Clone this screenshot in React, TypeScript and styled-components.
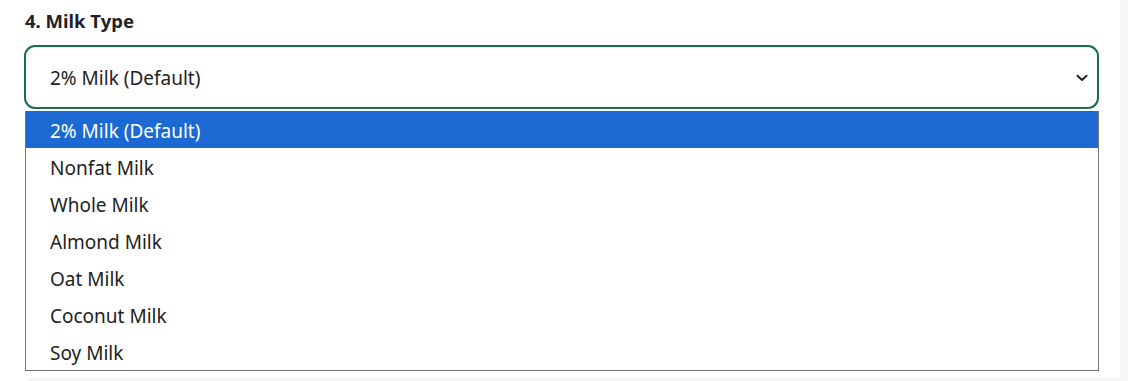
import React, { useState } from "react";
import styled, { createGlobalStyle } from "styled-components";

const GlobalStyle = createGlobalStyle`
  html, body {
    margin: 0;
    padding: 0;
    background: #ffffff;
    font-family: "Noto Sans", "Open Sans", sans-serif;
    color: #212529;
  }
`;

const options = [
  "2% Milk (Default)",
  "Nonfat Milk",
  "Whole Milk",
  "Almond Milk",
  "Oat Milk",
  "Coconut Milk",
  "Soy Milk",
];

const Page = styled.div`
  display: flex;
  width: 1128px;
  height: 381px;
  overflow: hidden;
`;

const Main = styled.div`
  flex: 1;
  display: flex;
  flex-direction: column;
`;

const Section = styled.div`
  flex: 1;
  padding: 9px 21px 0 24px;
`;

const BottomStrip = styled.div`
  height: 3px;
  margin-left: 28px;
  background: #f3f5f6;
`;

const SideStrip = styled.div`
  width: 8px;
  background: #f5f6f7;
`;

const Label = styled.div`
  font-size: 18.5px;
  font-weight: 700;
  line-height: 24px;
  color: #1f2326;
  margin-left: 1px;
`;

const SelectWrap = styled.div`
  position: relative;
  margin-top: 12px;
`;

const SelectBox = styled.div`
  box-sizing: border-box;
  height: 64px;
  border: 2px solid #1a6e4f;
  border-radius: 11px;
  display: flex;
  align-items: center;
  justify-content: space-between;
  padding: 1px 9px 0 24px;
  font-size: 19px;
  color: #222;
`;

const Menu = styled.ul`
  position: absolute;
  left: 1px;
  top: 66px;
  width: 1074px;
  box-sizing: border-box;
  margin: 0;
  padding: 0;
  list-style: none;
  background: #fff;
  border: 1px solid #767676;
  border-top: none;
`;

const Option = styled.li<{ $active?: boolean }>`
  height: 37px;
  display: flex;
  align-items: center;
  padding: 2px 0 0 24px;
  box-sizing: border-box;
  font-size: 19px;
  background: ${(p) => (p.$active ? "#1c69d4" : "#fff")};
  color: ${(p) => (p.$active ? "#fff" : "#222")};
`;

const Chevron = () => (
  <svg width="12" height="8" viewBox="0 0 12 8">
    <path d="M1.5 1.8 L6 6 L10.5 1.8" fill="none" stroke="#222" strokeWidth="2" strokeLinecap="round" strokeLinejoin="round" />
  </svg>
);

export default function App() {
  const [value] = useState(options[0]);
  return (
    <>
      <GlobalStyle />
      <Page>
        <Main>
          <Section>
            <Label>4. Milk Type</Label>
            <SelectWrap>
              <SelectBox>
                <span>{value}</span>
                <Chevron />
              </SelectBox>
              <Menu>
                {options.map((o) => (
                  <Option key={o} $active={o === value}>
                    {o}
                  </Option>
                ))}
              </Menu>
            </SelectWrap>
          </Section>
          <BottomStrip />
        </Main>
        <SideStrip />
      </Page>
    </>
  );
}
